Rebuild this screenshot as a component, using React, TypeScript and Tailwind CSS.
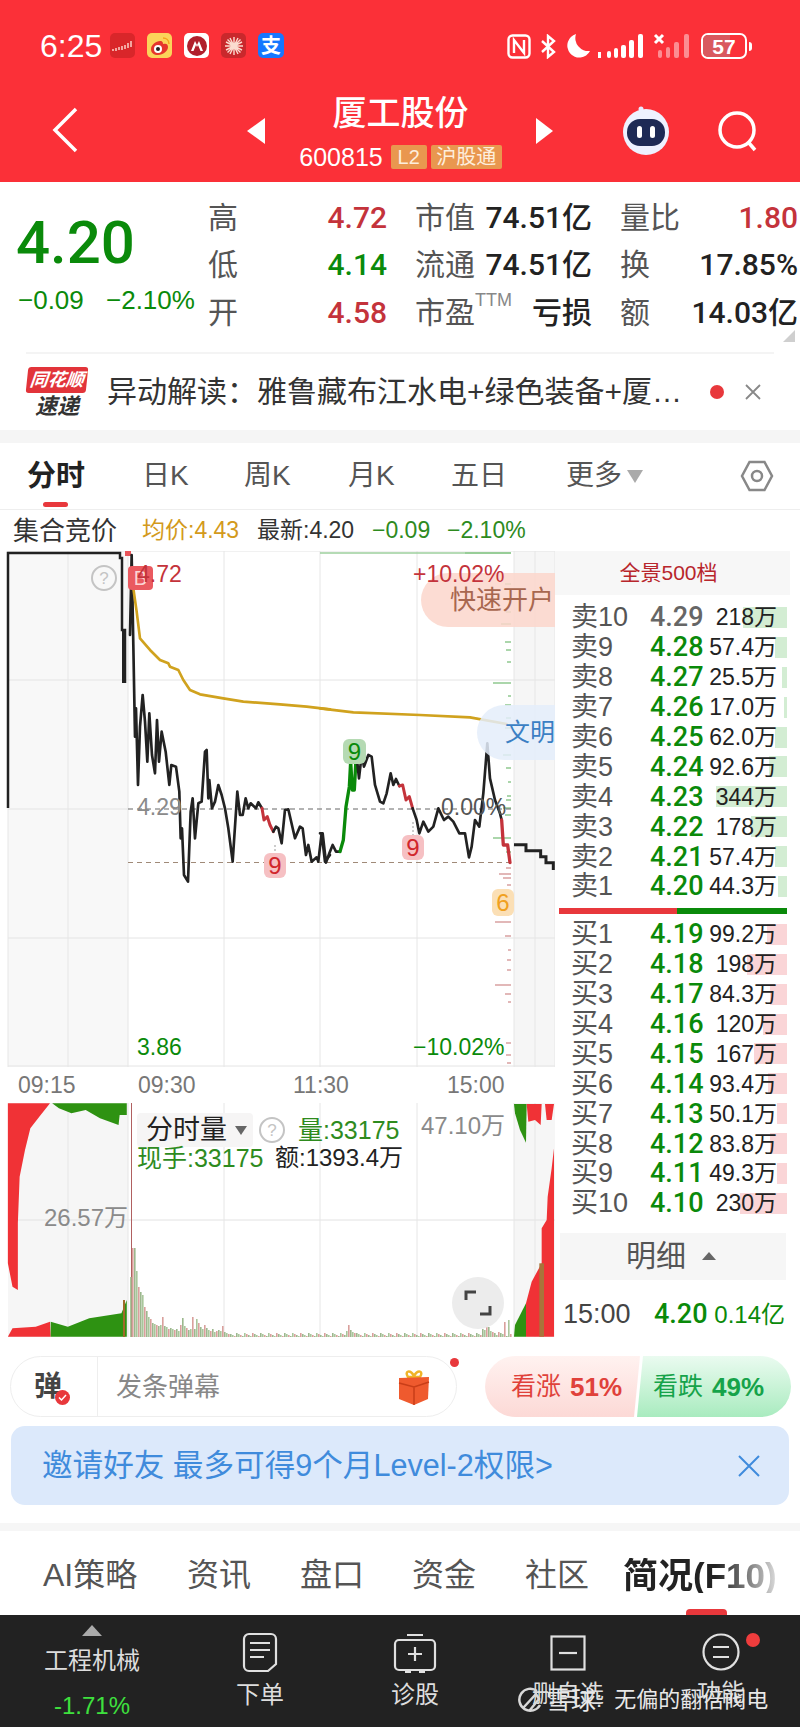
import React from "react";

const asks: [string, string, string, number][] = [
  ["卖10", "4.29", "218万", 44], ["卖9", "4.28", "57.4万", 12], ["卖8", "4.27", "25.5万", 5], ["卖7", "4.26", "17.0万", 3],
  ["卖6", "4.25", "62.0万", 12], ["卖5", "4.24", "92.6万", 18], ["卖4", "4.23", "344万", 71], ["卖3", "4.22", "178万", 36],
  ["卖2", "4.21", "57.4万", 12], ["卖1", "4.20", "44.3万", 9],
];
const bids: [string, string, string, number][] = [
  ["买1", "4.19", "99.2万", 20], ["买2", "4.18", "198万", 40], ["买3", "4.17", "84.3万", 17], ["买4", "4.16", "120万", 24],
  ["买5", "4.15", "167万", 33], ["买6", "4.14", "93.4万", 19], ["买7", "4.13", "50.1万", 10], ["买8", "4.12", "83.8万", 17],
  ["买9", "4.11", "49.3万", 10], ["买10", "4.10", "230万", 47],
];

// Buy and sell ticks beside the last trading minutes: [y, length]
const greenTicks = [[553, 46], [584, 6], [600, 4], [612, 5], [624, 10], [642, 6], [650, 5], [662, 4], [683, 18], [696, 3], [705, 6], [718, 5], [728, 6], [742, 5], [755, 8], [768, 5], [782, 3], [796, 4], [800, 5], [808, 8], [815, 6], [838, 18], [852, 5]];
const redTicks = [[868, 5], [874, 12], [878, 8], [885, 4], [895, 4], [903, 4], [910, 4], [922, 16], [936, 6], [950, 3], [960, 4], [970, 4], [985, 16], [994, 6], [1002, 3], [1043, 5], [1055, 5], [1063, 4]];

const volHead = [60, 89, 89, 66, 50, 45, 42, 30, 26, 20, 18, 14, 13, 12, 11, 12, 20, 11, 10, 8, 9, 8, 7, 8, 6, 12, 19, 11, 9, 7, 8, 20, 8, 18, 14, 10, 8, 12, 9, 7, 6, 8, 5, 6, 7, 6, 11, 5, 4, 3];
const volSpikes: Record<number, number> = { 108: 6, 109: 12, 110: 7, 111: 5, 112: 4, 176: 8, 177: 7, 178: 20, 179: 10, 180: 6, 181: 5, 182: 4, 184: 5, 187: 15, 189: 17 };
const volumes = Array.from({ length: 191 }, (_, i) => volHead[i] ?? volSpikes[i] ?? 1 + ((i * 7) % 4));
const volColors = ["#a9c69b", "#d9a09c", "#9cb88e"];

function Tick({ y, len, color }: { y: number; len: number; color: string }) {
  return <line x1={511 - len} x2={511} y1={y} y2={y} stroke={color} strokeWidth="1.5" />;
}

function PriceChart() {
  return (
    <div className="relative w-[555px] h-[516px] overflow-hidden">
      <svg className="absolute inset-0" width="555" height="516" viewBox="0 551 555 516" fill="none">
        <rect x="8" y="551" width="120" height="516" fill="#f8f8f8" />
        <rect x="514" y="551" width="41" height="516" fill="#f6f6f6" />
        {[551, 680, 938, 1066].map((y) => (
          <line key={y} x1="8" x2="555" y1={y} y2={y} stroke="#e4e4e4" />
        ))}
        <line x1="8" x2="128" y1="809" y2="809" stroke="#e4e4e4" />
        {[8, 68, 128, 224, 320, 417, 514, 535, 555].map((x) => (
          <line key={x} x1={x} x2={x} y1="551" y2="1067" stroke="#e6e6e6" />
        ))}
        <line x1="320" x2="511" y1="553" y2="553" stroke="#9ccf9c" strokeWidth="1.5" />
        {greenTicks.map(([y, l]) => <Tick key={y} y={y} len={l} color="#8fc98f" />)}
        {redTicks.map(([y, l]) => <Tick key={y} y={y} len={l} color="#d9a0a0" />)}
        <line x1="128" x2="514" y1="809" y2="809" stroke="#666" strokeDasharray="5 4" />
        <line x1="128" x2="510" y1="862.5" y2="862.5" stroke="#a08a78" strokeDasharray="5 4" />

        {/* Call auction trace */}
        <path d="M8 808V553H120V558H122V630H125V683" stroke="#222" strokeWidth="2.500" />
        <path d="M124 630V683" stroke="#222" strokeWidth="4" />
        <rect x="125" y="551" width="6" height="5" fill="#e8555a" />

        {/* Morning section of the price line */}
        <g transform="translate(100 545) scale(0.3333)" strokeWidth="8" strokeLinejoin="round" strokeLinecap="round">
          <polyline stroke="#222" points="90,270 95,30 100,300 105,575 108,490 114,720 120,545 128,450 135,530 142,650 148,505 156,630 165,685 171,525 177,650 185,560 197,620 208,720 214,660 228,665 238,740 242,880 246,850 252,990 264,1010 272,800 278,760 285,880 295,775 305,770 315,620 320,615 325,760 328,705 336,790 345,770 355,720 365,750 375,790 385,850 398,950 412,740 420,810 428,810 437,760 445,790 452,775 468,790 475,772 486,790" />
          <polyline stroke="#c4333b" strokeWidth="9" points="486,790 492,825 502,815 510,840 520,860" />
          <polyline stroke="#222" points="520,860 528,845 535,850 545,895 555,795 565,793 585,880 600,845 608,850 618,930 625,900 635,950 650,937 655,950 665,865 675,950 690,930" />
          <polyline stroke="#d0a21e" strokeWidth="8" points="100,130 110,200 120,280 150,315 180,345 205,355 210,365 235,375 250,405 270,435 300,448 370,460 430,470 540,478 620,485 690,493" />
        </g>
        {/* Afternoon section of the price line */}
        <g transform="translate(320 700) scale(0.3333)" strokeWidth="8" strokeLinejoin="round" strokeLinecap="round">
          <polyline stroke="#222" points="0,400 8,400 18,488 28,460 38,435 48,455 60,455" />
          <polyline stroke="#0a8a0a" strokeWidth="10" points="60,455 70,420 78,320 88,260 92,185 97,270 103,270 110,140 113,150" />
          <polyline stroke="#222" points="110,170 117,235 125,165 132,200 145,165 155,170 165,255 180,305 190,310 200,280 212,220 220,255 228,237 238,258" />
          <polyline stroke="#c4333b" strokeWidth="9" points="238,258 248,255 258,300 268,290 278,325" />
          <polyline stroke="#222" points="278,325 290,360 298,400 310,365 325,395 340,380 355,325 372,360 385,350 400,365 418,400 435,400 447,472 455,440 465,360 478,380 490,280 502,130 510,235 525,300 540,340 545,360" />
          <polyline stroke="#c4333b" strokeWidth="10" points="545,360 550,435 563,435 570,488" />
          <polyline stroke="#222" strokeWidth="9" strokeLinecap="butt" strokeLinejoin="miter" points="582,434 618,434 618,452 662,452 662,470 678,470 678,488 700,488 700,510" />
          <polyline stroke="#d0a21e" strokeWidth="8" points="0,25 100,37 300,45 450,52 560,72" />
        </g>
        <path d="M275 845V853M413 822V835" stroke="#999" strokeDasharray="2 2" />
      </svg>

      {/* Floating promotions */}
      <div className="absolute left-[421px] top-[22px] w-[134px] h-[54px] rounded-l-full bg-[#fbd6cb]/85 flex items-center pl-[29px] whitespace-nowrap text-[26px] text-[#a8674f]">快速开户</div>
      <div className="absolute left-[477px] top-[154px] w-[78px] h-[55px] rounded-l-full bg-[#e4edfa]/85 flex items-center pl-[28px] whitespace-nowrap text-[25px] text-[#3b7fc4]">文明</div>

      {/* Flags on the price line */}
      <div className="absolute left-[128px] top-[15px] w-[25px] h-[24px] rounded bg-[#ea5a60] flex items-center justify-center text-[20px] leading-none text-[#fbd5d5]">B</div>
      <div className="absolute left-[264px] top-[302px] w-[22px] h-[25px] rounded-md bg-[#f6c0c3] flex items-center justify-center text-[24px] leading-none text-[#d1262c]">9</div>
      <div className="absolute left-[402px] top-[284px] w-[22px] h-[25px] rounded-md bg-[#f6c0c3] flex items-center justify-center text-[24px] leading-none text-[#d1262c]">9</div>
      <div className="absolute left-[343px] top-[188px] w-[23px] h-[25px] rounded-md bg-[#b5dab3] flex items-center justify-center text-[24px] leading-none text-[#0a8a0a]">9</div>
      <div className="absolute left-[492px] top-[338px] w-[22px] h-[27px] rounded-md bg-[#fbdfb5] flex items-center justify-center text-[24px] leading-none text-[#f0a020]">6</div>

      <div className="absolute left-[91px] top-[14px] w-[26px] h-[26px] rounded-full border-2 border-[#c4c4c4] flex items-center justify-center text-[17px] leading-none text-[#c4c4c4]">?</div>
      <div className="absolute left-[137px] top-[11px] text-[23px] leading-[24px] text-[#c4333b]">4.72</div>
      <div className="absolute left-[137px] top-[244px] text-[23px] leading-[24px] text-[#8a8a8a]">4.29</div>
      <div className="absolute left-[441px] top-[244px] text-[23px] leading-[24px] text-[#555]">0.00%</div>
      <div className="absolute left-[413px] top-[11px] text-[23px] leading-[24px] text-[#c4333b]">+10.02%</div>
      <div className="absolute left-[137px] top-[484px] text-[23px] leading-[24px] text-[#0a8a0a]">3.86</div>
      <div className="absolute left-[413px] top-[484px] text-[23px] leading-[24px] text-[#0a8a0a]">−10.02%</div>
    </div>
  );
}

function VolumeChart() {
  return (
    <div className="relative w-[555px] h-[234px] overflow-hidden">
      <svg className="absolute inset-0" width="555" height="234" viewBox="0 1103 555 234" fill="none">
        <rect x="8" y="1103" width="120" height="234" fill="#f6f6f6" />
        <rect x="514" y="1103" width="41" height="234" fill="#f6f6f6" />
        <line x1="8" x2="555" y1="1220" y2="1220" stroke="#e2e2e2" />
        {[68, 128, 224, 320, 417, 514, 535].map((x) => (
          <line key={x} x1={x} x2={x} y1="1103" y2="1337" stroke="#e6e6e6" />
        ))}
        <g transform="translate(0 1090) scale(0.35714 0.3333)">
          <polygon fill="#f03236" points="22,40 140,40 110,80 85,115 70,180 55,260 50,400 50,600 35,590 22,520" />
          <polygon fill="#2e9212" points="146,40 355,40 355,75 335,75 332,105 280,85 240,60 200,70 165,55" />
          <polygon fill="#f03236" points="22,740 35,715 100,710 140,695 142,740" />
          <polygon fill="#2e9212" points="142,740 142,695 190,710 250,685 340,670 355,630 355,740" />
        </g>
        <g transform="translate(500 1100) scale(0.3333)">
          <polygon fill="#2e9212" points="42,12 80,12 78,128 60,90 45,40" />
          <polygon fill="#f03236" points="80,12 125,12 122,75 105,60 85,65" />
          <polygon fill="#f03236" points="135,12 162,12 155,60 140,60" />
          <polygon fill="#f03236" points="78,710 78,610 95,545 125,490 125,385 140,360 143,290 155,205 162,145 162,710" />
          <polygon fill="#2e9212" points="42,710 45,675 78,610 78,710" />
          <rect x="118" y="490" width="14" height="220" fill="#a8743a" />
        </g>
        <line x1="131.5" x2="131.5" y1="1103" y2="1337" stroke="#b06060" />
        <line x1="124" x2="124" y1="1300" y2="1337" stroke="#a06a2a" strokeWidth="2" />
        {volumes.map((h, i) => (
          <rect key={i} x={130 + i * 2} y={1337 - h} width="1.6" height={h} fill={volColors[i % 3]} />
        ))}
      </svg>

      <div className="absolute left-[137px] top-[10px] w-[116px] h-[34px] rounded bg-[#f6f5f5] flex items-center pl-[9px] text-[27px] leading-none text-[#222]">
        分时量
        <span className="ml-[8px] w-0 h-0 border-x-[6px] border-x-transparent border-t-[9px] border-t-[#666]" />
      </div>
      <div className="absolute left-[259px] top-[14px] w-[26px] h-[26px] rounded-full border-2 border-[#c4c4c4] flex items-center justify-center text-[17px] leading-none text-[#c4c4c4]">?</div>
      <div className="absolute left-[298px] top-[14px] text-[25px] leading-[26px] text-[#2e8b1e]">量:33175</div>
      <div className="absolute left-[137px] top-[42px] text-[25px] leading-[26px] text-[#2e8b1e]">现手:33175</div>
      <div className="absolute left-[275px] top-[42px] text-[24px] leading-[26px] text-[#222]">额:1393.4万</div>
      <div className="absolute left-[421px] top-[10px] text-[24px] leading-[26px] text-[#8a8a8a]">47.10万</div>
      <div className="absolute left-[44px] top-[102px] text-[24px] leading-[26px] text-[#8a8a8a]">26.57万</div>
      <div className="absolute left-[452px] top-[174px] w-[52px] h-[52px] rounded-full bg-[#ececec] flex items-center justify-center">
        <svg width="30" height="30" viewBox="0 0 30 30" fill="none" stroke="#444" strokeWidth="3">
          <path d="M3 12V4H13M27 18V26H17" />
        </svg>
      </div>
    </div>
  );
}

function BookRow({ row, barColor, priceGray }: { row: [string, string, string, number]; barColor: string; priceGray?: boolean }) {
  return (
    <div className="relative w-[232px] h-[29.9px] flex items-center pl-[16px] pr-[10px]">
      <div className="absolute right-0 top-[4px] h-[21px]" style={{ width: row[3], background: barColor }} />
      <span className="relative w-[79px] text-[27px] leading-none text-[#555]">{row[0]}</span>
      <span className={priceGray ? "relative font-['Roboto'] font-medium text-[27px] leading-none text-[#666]" : "relative font-['Roboto'] font-medium text-[27px] leading-none text-[#0a8a0a]"}>{row[1]}</span>
      <span className="relative ml-auto text-[23px] leading-none text-[#222]">{row[2]}</span>
    </div>
  );
}

function OrderBook() {
  return (
    <div className="w-[245px]">
      <div className="h-[44px] w-[235px] bg-[#f7f7f7] flex items-center justify-center pr-2 text-[21px] text-[#b8262c]">全景500档</div>
      <div className="pt-[8px]">
        {asks.map((r, i) => <BookRow key={r[0]} row={r} barColor="#d3edd3" priceGray={i === 0} />)}
      </div>
      <div className="mt-[6px] ml-[4px] w-[228px] h-[6px] flex">
        <div className="w-[118px] bg-[#e8383c]" />
        <div className="flex-1 bg-[#0a8a0a]" />
      </div>
      <div className="mt-[6px]">
        {bids.map((r) => <BookRow key={r[0]} row={r} barColor="#fad5d7" />)}
      </div>
      <div className="mt-[14px] ml-[5px] w-[226px] h-[47px] bg-[#f6f6f6] flex items-center pl-[66px] text-[30px] leading-none text-[#555]">
        明细
        <span className="ml-[16px] w-0 h-0 border-x-[7px] border-x-transparent border-b-[8px] border-b-[#666]" />
      </div>
      <div className="mt-[10px] h-[50px] w-[232px] flex items-center pl-[8px] pr-[2px]">
        <span className="w-[91px] text-[27px] leading-none text-[#444]">15:00</span>
        <span className="font-['Roboto'] font-medium text-[27px] leading-none text-[#0a8a0a]">4.20</span>
        <span className="ml-auto text-[24px] leading-none text-[#0a8a0a]">0.14亿</span>
      </div>
    </div>
  );
}

function StatusApps() {
  return (
    <div className="flex items-center gap-[12px] ml-[10px]">
      <div className="w-[25px] h-[25px] rounded-[5px] bg-[#d9262a] flex items-center justify-center">
        <svg width="22" height="12" viewBox="0 0 22 12" fill="none" stroke="#fbd0c8" strokeWidth="1.5"><path d="M1 9v2M4 8v3M7 7v3M10 6v4M13 5v4M16 3v5M19 1v6" /></svg>
      </div>
      <div className="w-[25px] h-[25px] rounded-[5px] bg-[#fbd35a] flex items-center justify-center">
        <svg width="22" height="22" viewBox="0 0 22 22"><path d="M2 14c0-4 5-8 9-8 3 0 3 2 3 3 3-1 5 0 5 3 0 4-5 8-10 8-4 0-7-2-7-6z" fill="#e6352c" /><circle cx="9" cy="14" r="4" fill="#fff" /><circle cx="9" cy="14" r="2" fill="#222" /><path d="M14 3c3 0 6 2 6 6" stroke="#f5a21b" strokeWidth="1.5" fill="none" /></svg>
      </div>
      <div className="w-[25px] h-[25px] rounded-[5px] bg-white flex items-center justify-center">
        <svg width="22" height="22" viewBox="0 0 22 22"><circle cx="11" cy="11" r="10" fill="#b01f2c" /><path d="M5 16 9 6l2 4 2-4 4 10h-2.500L12 10l-1 2-1-2-2.500 6z" fill="#fff" /></svg>
      </div>
      <div className="w-[25px] h-[25px] rounded-[5px] bg-[#c9282c] flex items-center justify-center">
        <svg width="20" height="20" viewBox="0 0 20 20" stroke="#fbdcd0" strokeWidth="1.4"><path d="M10 1v18M1 10h18M3.500 3.500l13 13M16.500 3.500l-13 13M6 2l8 16M14 2 6 18M2 6l16 8M18 6 2 14" /></svg>
      </div>
      <div className="w-[26px] h-[25px] rounded-[5px] bg-[#1677ff] flex items-center justify-center text-[20px] font-bold leading-none text-white">支</div>
    </div>
  );
}

function StatusRight() {
  return (
    <div className="flex items-center h-[26px] ml-auto mr-[48px]">
      <svg width="24" height="25" viewBox="0 0 24 25" fill="none" stroke="#fff" strokeWidth="2.4"><rect x="1.500" y="1.500" width="21" height="22" rx="4" /><path d="M7 19V6l10 13V6" /></svg>
      <svg className="ml-[9px]" width="16" height="25" viewBox="0 0 16 25" fill="none" stroke="#fff" strokeWidth="2.400"><path d="M2 7l12 11-6 5V2l6 5L2 18" /></svg>
      <svg className="ml-[9px]" width="26" height="26" viewBox="0 0 26 26" fill="#fff"><path d="M11 1a12 12 0 1 0 14 17A13 13 0 0 1 11 1z" /></svg>
      <svg className="ml-[7px]" width="46" height="26" viewBox="0 0 46 26" fill="#fff"><rect x="0" y="19" width="3" height="6" /><rect x="9" y="18" width="4" height="7" rx="2" /><rect x="16" y="15" width="4" height="10" rx="2" /><rect x="23" y="12" width="5" height="13" rx="2" /><rect x="31" y="7" width="5" height="18" rx="2" /><rect x="40" y="1" width="5" height="24" rx="2" /></svg>
      <svg className="ml-[9px]" width="38" height="26" viewBox="0 0 38 26" fill="#fff"><path d="M2 2l8 8M10 2l-8 8" stroke="#fff" strokeWidth="3" /><g opacity="0.45"><rect x="5" y="17" width="4" height="8" rx="2" /><rect x="13" y="14" width="4" height="11" rx="2" /><rect x="21" y="9" width="5" height="16" rx="2" /><rect x="31" y="1" width="5" height="24" rx="2" /></g></svg>
      <div className="ml-[10px] relative w-[46px] h-[26px] rounded-[7px] border-2 border-white overflow-hidden flex items-center justify-center">
        <div className="absolute left-0 top-0 bottom-0 w-[27px] bg-[#d9595f]" />
        <span className="relative text-[21px] font-bold leading-none text-white">57</span>
      </div>
      <div className="ml-[2px] w-[3px] h-[9px] rounded-r bg-white" />
    </div>
  );
}

function QuoteRow({ children }: { children: React.ReactNode }) {
  return <div className="flex h-[47.5px] items-center">{children}</div>;
}

function QuoteCell({ label, value, valueClass, width, gap }: { label: React.ReactNode; value: string; valueClass: string; width: string; gap?: string }) {
  return (
    <div className={`flex items-center justify-between ${width} ${gap ?? ""}`}>
      <span className="text-[30px] leading-none text-[#555] whitespace-nowrap">{label}</span>
      <span className={`font-['Roboto','Noto_Sans_CJK_SC',sans-serif] font-medium text-[30px] leading-none whitespace-nowrap ${valueClass}`}>{value}</span>
    </div>
  );
}

export default function App() {
  return (
    <div className="relative w-[800px] h-[1727px] overflow-hidden bg-white font-['Liberation_Sans','Noto_Sans_CJK_SC',sans-serif]">
      {/* Red app header with the system status bar */}
      <header className="h-[182px] bg-[#fb3038] text-white">
        <div className="h-[92px] pt-[33px] pl-[40px] flex items-start">
          <span className="text-[32px] leading-[26px] w-[60px] font-medium">6:25</span>
          <StatusApps />
          <StatusRight />
        </div>
        <div className="relative h-[90px] flex items-start">
          <svg className="ml-[51px] mt-[15px]" width="28" height="46" viewBox="0 0 28 46" fill="none" stroke="#fff" strokeWidth="3.500"><path d="M25 2 4 23l21 21" /></svg>
          <svg className="ml-[168px] mt-[26px]" width="18" height="26" viewBox="0 0 18 26" fill="#fff"><path d="M18 0v26L0 13z" /></svg>
          <div className="w-[271px] flex flex-col items-center">
            <div className="text-[34px] leading-[40px] font-medium mt-[1px]">厦工股份</div>
            <div className="flex items-center mt-[12px]">
              <span className="text-[25px] leading-[24px] mr-[8px]">600815</span>
              <span className="w-[36px] h-[24px] rounded-[2px] bg-[#e9974f] flex items-center justify-center text-[20px] leading-none text-[#fdeedd]">L2</span>
              <span className="ml-[4px] w-[71px] h-[24px] rounded-[2px] bg-[#e9974f] flex items-center justify-center text-[20px] leading-none text-[#fdeedd]">沪股通</span>
            </div>
          </div>
          <svg className="mt-[26px]" width="17" height="26" viewBox="0 0 17 26" fill="#fff"><path d="M0 0v26l17-13z" /></svg>
          <svg className="ml-[67px] mt-[13px]" width="52" height="50" viewBox="0 0 52 50">
            <circle cx="21" cy="4" r="2.500" fill="#e8e8ff" />
            <path d="M21 5v5" stroke="#e8e8ff" strokeWidth="2" />
            <circle cx="26" cy="27" r="23" fill="#eef1ff" />
            <rect x="7" y="14" width="38" height="27" rx="13" fill="#1e2a55" />
            <rect x="17" y="21" width="5" height="12" rx="2.500" fill="#fff" />
            <rect x="30" y="21" width="5" height="12" rx="2.500" fill="#fff" />
          </svg>
          <svg className="ml-[46px] mt-[19px]" width="42" height="42" viewBox="0 0 42 42" fill="none" stroke="#fff" strokeWidth="3.500"><circle cx="19" cy="19" r="17" /><path d="M31 32l6 7" /></svg>
        </div>
      </header>

      {/* Price and key figures */}
      <section className="relative h-[170px] flex pt-[12px]">
        <div className="w-[208px] pl-[16px]">
          <div className="font-['Roboto'] font-medium text-[60px] leading-[60px] mt-[19px] text-[#0a8a0a]">4.20</div>
          <div className="flex text-[26px] leading-none mt-[14px] pl-[2px] text-[#0a8a0a] whitespace-nowrap">
            <span className="w-[88px]">−0.09</span>
            <span>−2.10%</span>
          </div>
        </div>
        <div>
          <QuoteRow>
            <QuoteCell label="高" value="4.72" valueClass="text-[#c4333b]" width="w-[179px]" />
            <QuoteCell label="市值" value="74.51亿" valueClass="text-[#222]" width="w-[177px]" gap="ml-[28px]" />
            <QuoteCell label="量比" value="1.80" valueClass="text-[#c4333b]" width="w-[178px]" gap="ml-[28px]" />
          </QuoteRow>
          <QuoteRow>
            <QuoteCell label="低" value="4.14" valueClass="text-[#0a8a0a]" width="w-[179px]" />
            <QuoteCell label="流通" value="74.51亿" valueClass="text-[#222]" width="w-[177px]" gap="ml-[28px]" />
            <QuoteCell label="换" value="17.85%" valueClass="text-[#222]" width="w-[178px]" gap="ml-[28px]" />
          </QuoteRow>
          <QuoteRow>
            <QuoteCell label="开" value="4.58" valueClass="text-[#c4333b]" width="w-[179px]" />
            <QuoteCell label={<>市盈<sup className="text-[18px] text-[#888] align-[8px]">TTM</sup></>} value="亏损" valueClass="text-[#222]" width="w-[177px]" gap="ml-[28px]" />
            <QuoteCell label="额" value="14.03亿" valueClass="text-[#222]" width="w-[178px]" gap="ml-[28px]" />
          </QuoteRow>
        </div>
        <div className="absolute left-[783px] top-[148px] w-0 h-0 border-l-[12px] border-l-transparent border-b-[12px] border-b-[#cfcfcf]" />
      </section>

      {/* News ticker */}
      <section className="h-[78px] mx-[26px] border-t-2 border-[#f4f4f4] flex items-center">
        <div className="w-[62px] flex flex-col items-center">
          <div className="w-[60px] h-[26px] rounded-[3px] -skew-x-6 bg-[#e2343a] flex items-center justify-center text-[18px] font-bold italic leading-none text-white whitespace-nowrap">同花顺</div>
          <div className="mt-[3px] text-[22px] font-bold italic leading-none text-[#333]">速递</div>
        </div>
        <div className="ml-[19px] text-[30px] leading-none text-[#333] whitespace-nowrap">异动解读：雅鲁藏布江水电+绿色装备+厦…</div>
        <div className="ml-[28px] w-[14px] h-[14px] rounded-full bg-[#e8383c] shrink-0" />
        <svg className="ml-[20px] shrink-0" width="18" height="18" viewBox="0 0 18 18" stroke="#888" strokeWidth="1.800"><path d="M2 2l14 14M16 2 2 16" /></svg>
      </section>
      <div className="h-[13px] bg-[#f5f5f5]" />

      {/* Chart period tabs */}
      <nav className="relative h-[67px] border-b border-[#eeeeee] pl-[27px] flex items-center text-[28px] leading-none text-[#555]">
        <span className="w-[115px] text-[29px] font-bold text-[#222]">分时</span>
        <span className="w-[102px]">日K</span>
        <span className="w-[104px]">周K</span>
        <span className="w-[103px]">月K</span>
        <span className="w-[115px]">五日</span>
        <span>更多</span>
        <span className="ml-[5px] w-0 h-0 border-x-[8px] border-x-transparent border-t-[13px] border-t-[#aaaaaa]" />
        <svg className="ml-auto mr-[26px]" width="34" height="32" viewBox="0 0 34 32" fill="none" stroke="#888" strokeWidth="2.500"><path d="M9.500 2h15L32 16l-7.500 14h-15L2 16z" /><circle cx="17" cy="16" r="5" /></svg>
        <div className="absolute left-[43px] bottom-[2px] w-[25px] h-[5px] rounded-full bg-[#e8383c]" />
      </nav>

      {/* Auction and last-price summary */}
      <div className="h-[41px] pl-[13px] flex items-center whitespace-nowrap leading-none">
        <span className="text-[26px] text-[#333] w-[129px]">集合竞价</span>
        <span className="text-[23px] text-[#d39a1c] w-[115px]">均价:4.43</span>
        <span className="text-[23px] text-[#333] w-[115px]">最新:4.20</span>
        <span className="text-[23px] text-[#2e8b1e] w-[75px]">−0.09</span>
        <span className="text-[23px] text-[#2e8b1e]">−2.10%</span>
      </div>

      {/* Charts and order book */}
      <div className="flex h-[794px]">
        <div className="w-[555px]">
          <PriceChart />
          <div className="h-[36px] pl-[18px] flex items-center text-[23px] leading-none text-[#777]">
            <span className="w-[120px]">09:15</span>
            <span className="w-[155px]">09:30</span>
            <span className="w-[154px]">11:30</span>
            <span>15:00</span>
          </div>
          <VolumeChart />
        </div>
        <OrderBook />
      </div>

      {/* Bullet comments and sentiment */}
      <div className="h-[11px]" />
      <div className="h-[61px] pl-[10px] flex">
        <div className="relative w-[447px] rounded-full border border-[#eeeeee] flex items-center">
          <div className="relative w-[87px] h-full border-r border-[#eeeeee] pl-[23px] flex items-center text-[28px] font-bold leading-none text-[#444]">
            弹
            <span className="absolute left-[44px] top-[33px] w-[15px] h-[15px] rounded-full bg-[#e8383c] flex items-center justify-center">
              <svg width="9" height="9" viewBox="0 0 9 9" fill="none" stroke="#fff" strokeWidth="1.500"><path d="M1 4.500 3.500 7 8 2" /></svg>
            </span>
          </div>
          <span className="ml-[18px] text-[26px] leading-none text-[#888]">发条弹幕</span>
          <svg className="ml-auto mr-[24px]" width="36" height="36" viewBox="0 0 36 36">
            <path d="M12 8C8 2 14 0 18 7c4-7 10-5 6 1z" fill="none" stroke="#f0b429" strokeWidth="2.500" />
            <path d="M3 9l30-1-1 22-14 6-15-6z" fill="#ef5a2e" />
            <path d="M3 14l15 4 15-5M18 18v18" stroke="#c93e18" strokeWidth="1.500" fill="none" />
          </svg>
          <span className="absolute right-[-3px] top-[1px] w-[9px] h-[9px] rounded-full bg-[#e8383c]" />
        </div>
        <div className="ml-[28px] w-[155px] rounded-l-full bg-gradient-to-b from-[#fff2f0] to-[#fcd9d6] [clip-path:polygon(0_0,100%_0,calc(100%-6px)_100%,0_100%)] flex items-center pl-[26px] whitespace-nowrap">
          <span className="text-[25px] leading-none text-[#e0413a]">看涨</span>
          <span className="ml-[9px] text-[26px] font-bold leading-none text-[#e0413a]">51%</span>
        </div>
        <div className="-ml-[3px] w-[154px] rounded-r-full bg-gradient-to-b from-[#eafbf0] to-[#a8ebbf] [clip-path:polygon(6px_0,100%_0,100%_100%,0_100%)] flex items-center pl-[16px] whitespace-nowrap">
          <span className="text-[25px] leading-none text-[#16a34a]">看跌</span>
          <span className="ml-[9px] text-[26px] font-bold leading-none text-[#16a34a]">49%</span>
        </div>
      </div>

      {/* Invitation banner */}
      <div className="mt-[9px] mx-[11px] h-[79px] rounded-[14px] bg-[#dce9fb] flex items-center pl-[31px] pr-[29px] text-[30.6px] leading-none text-[#3f8bdc] whitespace-nowrap">
        邀请好友 最多可得9个月Level-2权限&gt;
        <svg className="ml-auto" width="22" height="22" viewBox="0 0 22 22" stroke="#3f8bdc" strokeWidth="2"><path d="M1 1l20 20M21 1 1 21" /></svg>
      </div>
      <div className="mt-[18px] h-[8px] bg-[#f6f6f6]" />

      {/* Detail tabs */}
      <nav className="relative h-[84px] pt-[4px] pl-[43px] flex items-center text-[32px] leading-none text-[#555] whitespace-nowrap">
        <span className="w-[144px]">AI策略</span>
        <span className="w-[113px]">资讯</span>
        <span className="w-[112px]">盘口</span>
        <span className="w-[113px]">资金</span>
        <span className="w-[98px]">社区</span>
        <span className="text-[35px] font-bold bg-gradient-to-r from-[#222] from-[60%] to-[#dddddd] bg-clip-text text-transparent">简况(F10)</span>
        <div className="absolute left-[686px] bottom-0 w-[41px] h-[6px] rounded-t bg-[#e8383c]" />
      </nav>

      {/* Bottom action bar */}
      <footer className="relative h-[112px] bg-[#222222] flex text-[#dddddd]">
        <div className="w-[184px] flex flex-col items-center pt-[10px]">
          <span className="w-0 h-0 border-x-[10px] border-x-transparent border-b-[11px] border-b-[#aaaaaa]" />
          <span className="mt-[13px] text-[24px] leading-none">工程机械</span>
          <span className="mt-[21px] text-[24px] leading-none text-[#3ee03e]">-1.71%</span>
        </div>
        <div className="w-[152px] flex flex-col items-center pt-[17px]">
          <svg width="36" height="41" viewBox="0 0 36 41" fill="none" stroke="#e0e0e0" strokeWidth="2.200"><path d="M7 2h22a5 5 0 0 1 5 5v25l-8 7H7a5 5 0 0 1-5-5V7a5 5 0 0 1 5-5z" /><path d="M8 11h20M8 18h20M8 25h14" /></svg>
          <span className="mt-[10px] text-[24px] leading-none">下单</span>
        </div>
        <div className="w-[158px] flex flex-col items-center pt-[18px]">
          <svg width="44" height="40" viewBox="0 0 44 40" fill="none" stroke="#e0e0e0" strokeWidth="2.200"><path d="M14 2h16M6 7h32a4 4 0 0 1 4 4v22a4 4 0 0 1-4 4H6a4 4 0 0 1-4-4V11a4 4 0 0 1 4-4z" /><path d="M22 14v14M15 21h14M12 39h6M26 39h6" /></svg>
          <span className="mt-[10px] text-[24px] leading-none">诊股</span>
        </div>
        <div className="w-[148px] flex flex-col items-center pt-[20px]">
          <svg width="36" height="36" viewBox="0 0 36 36" fill="none" stroke="#e0e0e0" strokeWidth="2.200"><rect x="1.500" y="1.500" width="33" height="33" /><path d="M9 18h18" /></svg>
          <span className="mt-[11px] text-[24px] leading-none">删自选</span>
        </div>
        <div className="relative w-[158px] flex flex-col items-center pt-[18px]">
          <svg width="38" height="38" viewBox="0 0 38 38" fill="none" stroke="#e0e0e0" strokeWidth="2.200"><circle cx="19" cy="19" r="17.500" /><path d="M11 14h16M11 24h16" /></svg>
          <span className="mt-[10px] text-[24px] leading-none">功能</span>
          <span className="absolute left-[104px] top-[18px] w-[14px] h-[14px] rounded-full bg-[#ef3d3d]" />
        </div>
        <div className="absolute left-[517px] top-[72px] flex items-center whitespace-nowrap leading-none text-[#e8e8e8]">
          <svg width="26" height="26" viewBox="0 0 26 26" fill="none" stroke="#d8d8d8" strokeWidth="2.500"><path d="M20 4A11 11 0 1 0 23 18M7 20 19 7l3 5-9 11" /></svg>
          <span className="ml-[3px] text-[25px]">雪球</span>
          <span className="text-[22px] whitespace-pre">:  无偏的翻倍阀电</span>
        </div>
      </footer>
    </div>
  );
}
